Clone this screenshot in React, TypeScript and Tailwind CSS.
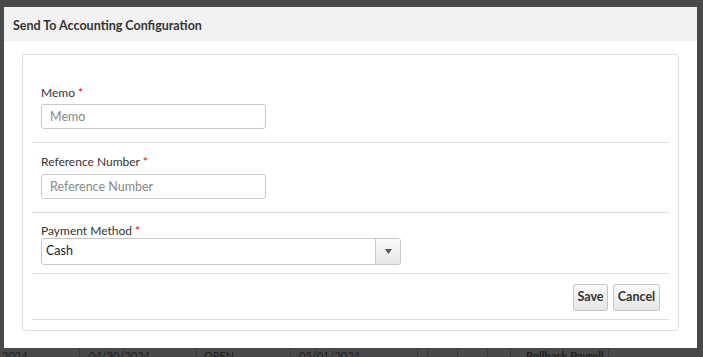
import React from "react";

const font = { fontFamily: 'Lato, "Open Sans", sans-serif' };

function Label({ text }: { text: string }) {
  return (
    <div className="text-[12px] leading-[16px] text-[#333]">
      {text} <span className="text-[#e00]">*</span>
    </div>
  );
}

export default function App() {
  return (
    <div className="w-[703px] h-[357px] bg-[#494949] overflow-hidden flex flex-col" style={font}>
      <div className="pt-[7px] pl-[4px]">
        <div className="w-[693px] h-[341px] bg-white flex flex-col">
          <div className="h-[34px] bg-[#f2f2f2] flex items-center pt-[4px] pl-[9px] text-[12.5px] font-bold text-[#333]">
            Send To Accounting Configuration
          </div>
          <div className="pt-[13px] pl-[18px]">
            <div className="w-[657px] h-[277px] border border-[#ddd] rounded-[4px] px-[9px] flex flex-col">
              <div className="h-[20px]" />
              <div className="h-[68px] border-b border-[#ddd] pl-[9px] pt-[10px]">
                <Label text="Memo" />
                <input
                  placeholder="Memo"
                  className="mt-[3px] w-[225px] h-[25px] border border-[#c8c8c8] rounded-[3px] px-[8px] text-[12.5px] text-[#333] placeholder:text-[#888] outline-none"
                />
              </div>
              <div className="h-[70px] border-b border-[#ddd] pl-[9px] pt-[11px]">
                <Label text="Reference Number" />
                <input
                  placeholder="Reference Number"
                  className="mt-[4px] w-[225px] h-[25px] border border-[#c8c8c8] rounded-[3px] px-[8px] text-[12.5px] text-[#333] placeholder:text-[#888] outline-none"
                />
              </div>
              <div className="h-[61px] border-b border-[#ddd] pl-[9px] pt-[10px]">
                <Label text="Payment Method" />
                <div className="mt-[-1px] w-[360px] h-[27px] border border-[#c8c8c8] rounded-[3px] flex">
                  <div className="flex-1 flex items-center pl-[4px] text-[12.5px] text-[#222]">Cash</div>
                  <div className="w-[25px] border-l border-[#c8c8c8] bg-gradient-to-b from-[#fafafa] to-[#e8e8e8] flex items-center justify-center">
                    <svg width="7" height="5" viewBox="0 0 7 5">
                      <path d="M0 0 H7 L3.5 5 Z" fill="#555" />
                    </svg>
                  </div>
                </div>
              </div>
              <div className="h-[46px] border-b border-[#ddd] flex items-start justify-end pt-[10px] gap-[5px] pr-[9px]">
                <button className="h-[27px] w-[35px] border border-[#c4c4c4] rounded-[3px] bg-gradient-to-b from-[#fbfbfb] to-[#e6e6e6] text-[12.5px] font-bold text-[#333]">
                  Save
                </button>
                <button className="h-[27px] w-[47px] border border-[#c4c4c4] rounded-[3px] bg-gradient-to-b from-[#fbfbfb] to-[#e6e6e6] text-[12.5px] font-bold text-[#333]">
                  Cancel
                </button>
              </div>
            </div>
          </div>
        </div>
      </div>
      <div className="flex h-[12px] text-[11px] leading-[16px] text-[#1e1e1e] whitespace-nowrap">
        <div className="w-[80px] pl-[2px] border-r border-[#3a3a3a]">2024</div>
        <div className="w-[117px] pl-[9px] border-r border-[#3a3a3a]">04/30/2024</div>
        <div className="w-[94px] pl-[7px] border-r border-[#3a3a3a]">OPEN</div>
        <div className="w-[127px] pl-[8px] border-r border-[#3a3a3a]">05/01/2024</div>
        <div className="w-[10px] border-r border-[#3a3a3a]" />
        <div className="w-[30px] border-r border-[#3a3a3a]" />
        <div className="w-[30px] border-r border-[#3a3a3a]" />
        <div className="w-[23px] border-r border-[#3a3a3a]" />
        <div className="w-[98px] pl-[15px] font-bold border-r border-[#3a3a3a]">Rollback Payroll</div>
      </div>
    </div>
  );
}
